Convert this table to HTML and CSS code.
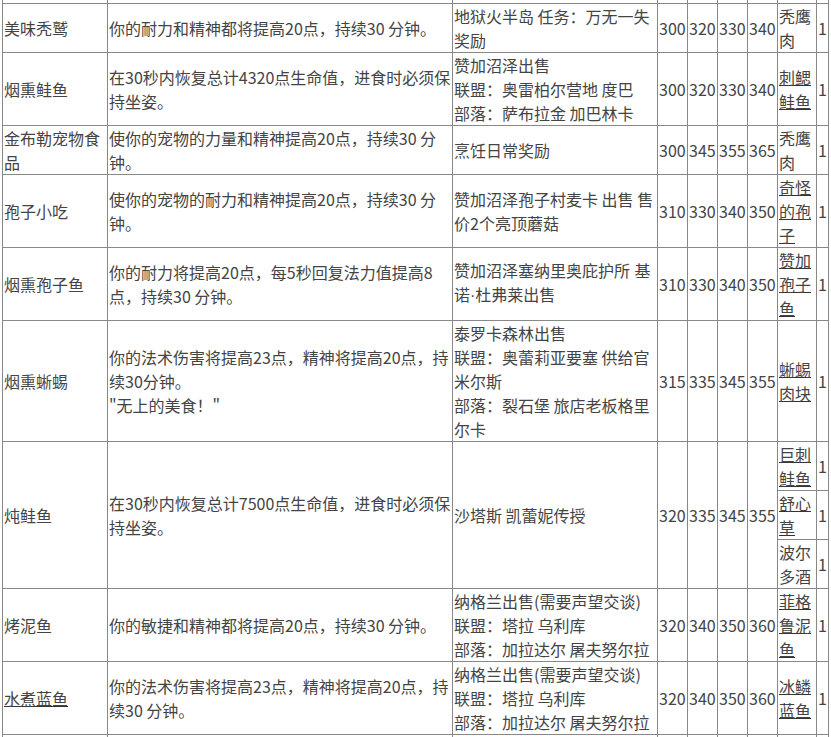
FILE: index.html
```html
<!DOCTYPE html>
<html lang="zh-CN">
<head>
<meta charset="utf-8">
<title>烹饪配方</title>
<link rel="stylesheet" href="styles.css">
</head>
<body>
<div class="page">
<table class="recipes">
  <colgroup>
    <col class="c-name">
    <col class="c-desc">
    <col class="c-src">
    <col class="c-num">
    <col class="c-num">
    <col class="c-num">
    <col class="c-num">
    <col class="c-mat">
    <col class="c-qty">
  </colgroup>
  <tbody>
    <tr class="filler-row">
      <td></td><td></td><td></td><td></td><td></td><td></td><td></td><td></td><td></td>
    </tr>
    <tr>
      <td>美味秃鹫</td>
      <td>你的耐力和精神都将提高20点，持续30 分钟。</td>
      <td>地狱火半岛 任务：万无一失奖励</td>
      <td>300</td><td>320</td><td>330</td><td>340</td>
      <td>秃鹰肉</td>
      <td>1</td>
    </tr>
    <tr>
      <td>烟熏鲑鱼</td>
      <td>在30秒内恢复总计4320点生命值，进食时必须保持坐姿。</td>
      <td>赞加沼泽出售<br>联盟：奥雷柏尔营地 度巴<br>部落：萨布拉金 加巴林卡</td>
      <td>300</td><td>320</td><td>330</td><td>340</td>
      <td><a class="item-link" href="#">刺鳃鲑鱼</a></td>
      <td>1</td>
    </tr>
    <tr>
      <td>金布勒宠物食品</td>
      <td>使你的宠物的力量和精神提高20点，持续30 分钟。</td>
      <td>烹饪日常奖励</td>
      <td>300</td><td>345</td><td>355</td><td>365</td>
      <td>秃鹰肉</td>
      <td>1</td>
    </tr>
    <tr>
      <td>孢子小吃</td>
      <td>使你的宠物的耐力和精神提高20点，持续30 分钟。</td>
      <td>赞加沼泽孢子村麦卡 出售 售价2个亮顶蘑菇</td>
      <td>310</td><td>330</td><td>340</td><td>350</td>
      <td><a class="item-link" href="#">奇怪的孢子</a></td>
      <td>1</td>
    </tr>
    <tr>
      <td>烟熏孢子鱼</td>
      <td>你的耐力将提高20点，每5秒回复法力值提高8点，持续30 分钟。</td>
      <td class="narrow-dot">赞加沼泽塞纳里奥庇护所 基诺·杜弗莱出售</td>
      <td>310</td><td>330</td><td>340</td><td>350</td>
      <td><a class="item-link" href="#">赞加孢子鱼</a></td>
      <td>1</td>
    </tr>
    <tr>
      <td>烟熏蜥蜴</td>
      <td>你的法术伤害将提高23点，精神将提高20点，持续30分钟。<br>"无上的美食！"</td>
      <td>泰罗卡森林出售<br>联盟：奥蕾莉亚要塞 供给官米尔斯<br>部落：裂石堡 旅店老板格里尔卡</td>
      <td>315</td><td>335</td><td>345</td><td>355</td>
      <td><a class="item-link" href="#">蜥蜴肉块</a></td>
      <td>1</td>
    </tr>
    <tr>
      <td rowspan="3">炖鲑鱼</td>
      <td rowspan="3">在30秒内恢复总计7500点生命值，进食时必须保持坐姿。</td>
      <td rowspan="3">沙塔斯 凯蕾妮传授</td>
      <td rowspan="3">320</td><td rowspan="3">335</td><td rowspan="3">345</td><td rowspan="3">355</td>
      <td><a class="item-link" href="#">巨刺鲑鱼</a></td>
      <td>1</td>
    </tr>
    <tr>
      <td><a class="item-link" href="#">舒心草</a></td>
      <td>1</td>
    </tr>
    <tr>
      <td>波尔多酒</td>
      <td>1</td>
    </tr>
    <tr>
      <td>烤泥鱼</td>
      <td>你的敏捷和精神都将提高20点，持续30 分钟。</td>
      <td>纳格兰出售(需要声望交谈)<br>联盟：塔拉 乌利库<br>部落：加拉达尔 屠夫努尔拉</td>
      <td>320</td><td>340</td><td>350</td><td>360</td>
      <td><a class="item-link" href="#">菲格鲁泥鱼</a></td>
      <td>1</td>
    </tr>
    <tr>
      <td><a class="item-link" href="#">水煮蓝鱼</a></td>
      <td>你的法术伤害将提高23点，精神将提高20点，持续30 分钟。</td>
      <td>纳格兰出售(需要声望交谈)<br>联盟：塔拉 乌利库<br>部落：加拉达尔 屠夫努尔拉</td>
      <td>320</td><td>340</td><td>350</td><td>360</td>
      <td><a class="item-link" href="#">冰鳞蓝鱼</a></td>
      <td>1</td>
    </tr>
    <tr class="filler-row">
      <td></td><td></td><td></td><td></td><td></td><td></td><td></td><td></td><td></td>
    </tr>
  </tbody>
</table>
</div>
</body>
</html>
```

FILE: styles.css
```css
html, body {
  margin: 0;
  padding: 0;
  background: #ffffff;
}

.page {
  padding-left: 2px;
  overflow: hidden;
}

.recipes {
  margin-top: -46px;
  width: 827px;
  table-layout: fixed;
  border-collapse: collapse;
  font-family: "Noto Sans CJK SC", "Microsoft YaHei", sans-serif;
  font-size: 16px;
  line-height: 24px;
  color: #444444;
}

.recipes td {
  border: 1px solid #888888;
  padding: 0 0 0 1px;
  vertical-align: middle;
  text-align: left;
  word-break: normal;
  overflow: hidden;
}

.recipes td.narrow-dot {
  font-family: "Liberation Sans", "Noto Sans CJK SC", sans-serif;
}

.filler-row td {
  height: 48px;
}

.c-name { width: 105px; }
.c-desc { width: 345px; }
.c-src  { width: 205px; }
.c-num  { width: 30px; }
.c-mat  { width: 39px; }
.c-qty  { width: 12px; }

.item-link {
  color: #444444;
  text-decoration: underline;
  text-decoration-color: #333333;
}
```
